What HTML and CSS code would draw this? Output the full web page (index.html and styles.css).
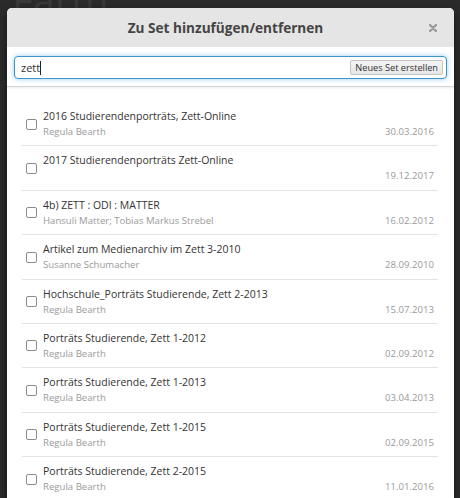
FILE: index.html
```html
<!DOCTYPE html>
<html lang="de">
<head>
<meta charset="utf-8">
<title>Zu Set hinzufügen/entfernen</title>
<link rel="stylesheet" href="styles.css">
</head>
<body>
<div class="backdrop-text">Farm</div>
<div class="modal">
  <div class="modal-header">
    <h3 class="modal-title">Zu Set hinzufügen/entfernen</h3>
    <span class="close" aria-label="Schliessen">
      <svg width="8" height="8" viewBox="0 0 8 8"><path d="M1 1L7 7M7 1L1 7" stroke="#9a9a9a" stroke-width="2.4" stroke-linecap="round"/></svg>
    </span>
  </div>
  <div class="search">
    <div class="search-field">
      <span class="search-value">zett</span><span class="caret"></span>
      <button class="btn-new" type="button">Neues Set erstellen</button>
    </div>
  </div>
  <ul class="set-list">
    <li class="set-row"><span class="cb"></span><div class="set-body"><div class="set-title">2016 Studierendenporträts, Zett-Online</div><div class="set-meta"><span>Regula Bearth</span><span>30.03.2016</span></div></div></li>
    <li class="set-row"><span class="cb"></span><div class="set-body"><div class="set-title">2017 Studierendenporträts Zett-Online</div><div class="set-meta"><span></span><span>19.12.2017</span></div></div></li>
    <li class="set-row"><span class="cb"></span><div class="set-body"><div class="set-title">4b) ZETT : ODI : MATTER</div><div class="set-meta"><span>Hansuli Matter; Tobias Markus Strebel</span><span>16.02.2012</span></div></div></li>
    <li class="set-row"><span class="cb"></span><div class="set-body"><div class="set-title">Artikel zum Medienarchiv im Zett 3-2010</div><div class="set-meta"><span>Susanne Schumacher</span><span>28.09.2010</span></div></div></li>
    <li class="set-row"><span class="cb"></span><div class="set-body"><div class="set-title">Hochschule_Porträts Studierende, Zett 2-2013</div><div class="set-meta"><span>Regula Bearth</span><span>15.07.2013</span></div></div></li>
    <li class="set-row"><span class="cb"></span><div class="set-body"><div class="set-title">Porträts Studierende, Zett 1-2012</div><div class="set-meta"><span>Regula Bearth</span><span>02.09.2012</span></div></div></li>
    <li class="set-row"><span class="cb"></span><div class="set-body"><div class="set-title">Porträts Studierende, Zett 1-2013</div><div class="set-meta"><span>Regula Bearth</span><span>03.04.2013</span></div></div></li>
    <li class="set-row"><span class="cb"></span><div class="set-body"><div class="set-title">Porträts Studierende, Zett 1-2015</div><div class="set-meta"><span>Regula Bearth</span><span>02.09.2015</span></div></div></li>
    <li class="set-row"><span class="cb"></span><div class="set-body"><div class="set-title">Porträts Studierende, Zett 2-2015</div><div class="set-meta"><span>Regula Bearth</span><span>11.01.2016</span></div></div></li>
  </ul>
</div>
</body>
</html>
```

FILE: styles.css
```css
html, body {
  margin: 0;
  padding: 0;
  height: 100%;
  overflow: hidden;
}
body {
  background: #2b2b2b;
  font-family: "Open Sans", "Noto Sans", sans-serif;
  position: relative;
}
.backdrop-text {
  position: absolute;
  top: -28px;
  left: 12px;
  font-size: 40px;
  color: #3a3a3a;
  font-family: "Open Sans", sans-serif;
}
.modal {
  position: relative;
  margin: 8px 6px 0 7px;
  background: #fff;
  border-radius: 5px;
  overflow: hidden;
  box-shadow: 0 3px 10px rgba(0,0,0,0.5);
}
.modal-header {
  background: #e5e5e5;
  height: 39px;
  display: flex;
  align-items: center;
  justify-content: center;
  padding-right: 10px;
  position: relative;
}
.modal-title {
  margin: 0;
  font-size: 13.6px;
  font-weight: 700;
  color: #444;
}
.close {
  position: absolute;
  right: 17px;
  top: 16px;
  width: 8px;
  height: 8px;
  display: flex;
}
.search {
  padding: 9px 7px 7px 7px;
  border-bottom: 1px solid #d6d6d6;
  box-shadow: 0 1px 2px rgba(0,0,0,0.08);
  position: relative;
}
.search-field {
  height: 21px;
  border: 1px solid #3d95c9;
  border-radius: 4px;
  box-shadow: 0 0 5px rgba(82,168,236,0.6);
  display: flex;
  align-items: center;
  padding: 0 3px 0 6px;
  background: #fff;
}
.search-value {
  font-size: 11px;
  color: #333;
}
.caret {
  width: 1px;
  height: 14px;
  background: #222;
}
.btn-new {
  margin-left: auto;
  font-family: "Open Sans", sans-serif;
  font-size: 9.2px;
  color: #333;
  background: linear-gradient(#f4f4f4, #e6e6e6);
  border: 1px solid #c4c4c4;
  border-radius: 2px;
  padding: 0 4px;
  height: 15px;
  line-height: 13px;
}
.set-list {
  list-style: none;
  margin: 0;
  padding: 15px 16px 0 15px;
}
.set-row {
  display: flex;
  align-items: center;
  padding: 6px 4px 5.4px 4px;
  border-bottom: 1px solid #e3e3e3;
}
.cb {
  width: 9px;
  height: 9px;
  border: 1px solid #8c8c8c;
  border-radius: 2px;
  background: #fff;
  flex: none;
  margin: 0 6px 0 0;
}
.set-body {
  flex: 1;
  min-width: 0;
}
.set-title {
  font-size: 10.5px;
  line-height: 16px;
  color: #333;
  white-space: nowrap;
}
.set-meta {
  display: flex;
  justify-content: space-between;
  font-size: 9.6px;
  line-height: 16px;
  color: #9a9a9a;
}
```
